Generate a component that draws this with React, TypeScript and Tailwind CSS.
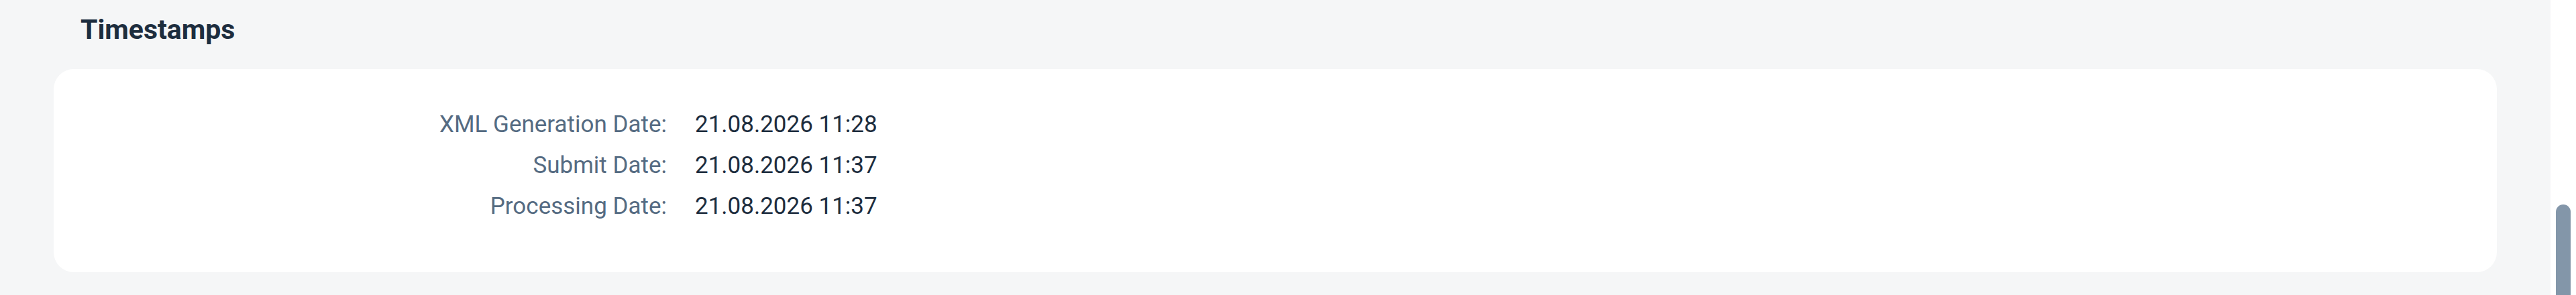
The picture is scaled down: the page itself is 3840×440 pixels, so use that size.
import React from 'react';

const rows = [
  { label: 'XML Generation Date:', value: '21.08.2026 11:28' },
  { label: 'Submit Date:', value: '21.08.2026 11:37' },
  { label: 'Processing Date:', value: '21.08.2026 11:37' },
];

export default function App() {
  return (
    <div className="flex h-[440px] w-full overflow-hidden bg-[#f5f6f7] font-['Roboto',sans-serif]">
      <main className="flex flex-1 flex-col">
        <h2 className="pl-[120px] pt-[20px] text-[41px] leading-[48px] font-bold text-[#1d2d3e]">
          Timestamps
        </h2>
        <section className="mx-[80px] mt-[35px] h-[303px] rounded-[30px] bg-white pt-[52px]">
          <dl className="grid grid-cols-[956px_1fr]">
            {rows.map((r) => (
              <React.Fragment key={r.label}>
                <dt className="pr-[42px] text-right text-[35px] leading-[61px] text-[#556b82]">
                  {r.label}
                </dt>
                <dd className="text-[35px] leading-[61px] text-[#1d2d3e]">
                  {r.value}
                </dd>
              </React.Fragment>
            ))}
          </dl>
        </section>
      </main>
      {/* scrollbar track */}
      <div className="flex w-[38px] flex-col bg-white px-[8px] pt-[305px]">
        <div className="flex-1 rounded-t-full bg-[#8396a9]" />
      </div>
    </div>
  );
}
